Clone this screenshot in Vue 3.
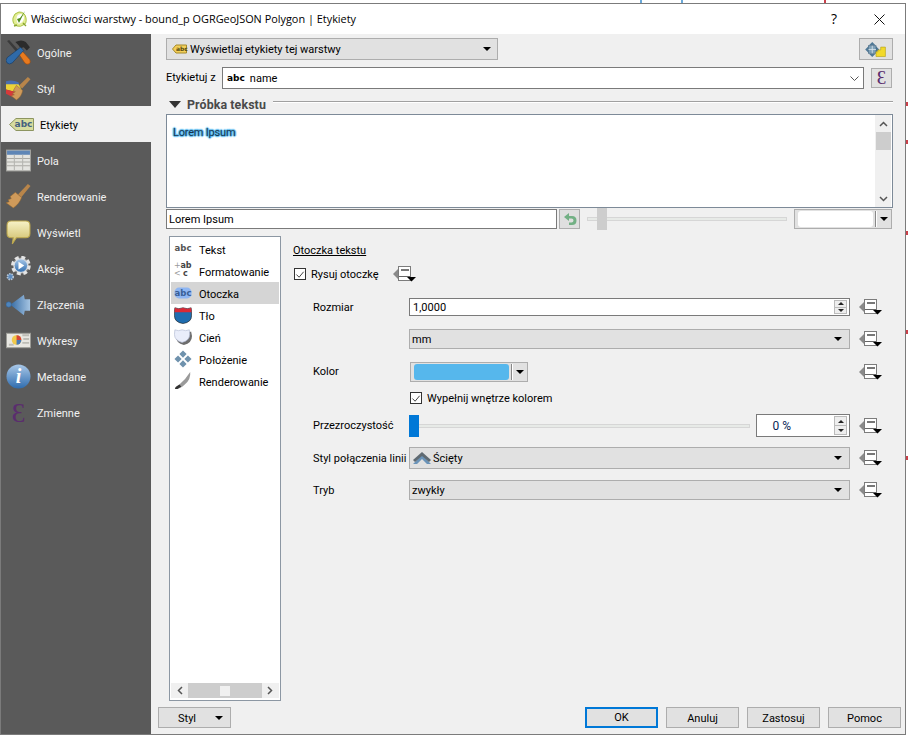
<script setup>
const nav = [
  { id: 'i-general', label: 'Ogólne' },
  { id: 'i-style', label: 'Styl' },
  { id: 'i-labels', label: 'Etykiety', active: true, glyph: 'abc', cls: 'g-labels' },
  { id: 'i-fields', label: 'Pola' },
  { id: 'i-brush', label: 'Renderowanie' },
  { id: 'i-display', label: 'Wyświetl' },
  { id: 'i-actions', label: 'Akcje' },
  { id: 'i-joins', label: 'Złączenia' },
  { id: 'i-charts', label: 'Wykresy' },
  { id: 'i-meta', label: 'Metadane', glyph: 'i', cls: 'g-meta' },
  { id: 'i-vars', label: 'Zmienne', glyph: 'Ɛ', cls: 'g-vars' },
]
const tabs = [
  { id: 't-text', label: 'Tekst', glyph: 'abc', cls: 'g-text' },
  { id: 't-format', label: 'Formatowanie', format: true },
  { id: 't-buffer', label: 'Otoczka', active: true, glyph: 'abc', cls: 'g-buffer' },
  { id: 't-bg', label: 'Tło' },
  { id: 't-shadow', label: 'Cień' },
  { id: 't-place', label: 'Położenie' },
  { id: 't-render', label: 'Renderowanie' },
]
</script>

<template>
  <div class="page">
    <svg class="defs" width="0" height="0" aria-hidden="true">
      <defs>
        <linearGradient id="gBlue" x1="0" y1="0" x2="0" y2="1"><stop offset="0" stop-color="#a9c8e8"/><stop offset="1" stop-color="#2f6cae"/></linearGradient>
        <linearGradient id="gYellow" x1="0" y1="0" x2="0" y2="1"><stop offset="0" stop-color="#f7f2c8"/><stop offset="1" stop-color="#cdbb62"/></linearGradient>
        <linearGradient id="gArrow" x1="0" y1="0" x2="1" y2="0"><stop offset="0" stop-color="#3b70a8"/><stop offset="1" stop-color="#a5c4e2"/></linearGradient>
      </defs>
      <symbol id="dd" viewBox="0 0 23 16">
        <path d="M0 8 5 3v10z" fill="#8a8a8a"/>
        <rect x="5.500" y="0.500" width="12" height="14" fill="#fff" stroke="#7c7c7c"/>
        <rect x="8" y="3" width="8" height="2" fill="#777"/>
        <path d="M6 10.500h11" stroke="#666"/>
        <path d="M14 11h9l-4.500 4.500z" fill="#000"/>
      </symbol>
      <symbol id="i-general" viewBox="0 0 24 24">
        <path d="M1 1l2-1 11 12-2 2z" fill="#3a3a3a"/>
        <path d="M12 13l3-3 8 9q1 3-1 4t-4-1z" fill="#e87a1e" stroke="#9a4a10" stroke-width=".6"/>
        <path d="M9 2q6-3 10 0l4 5-3 3-3-3-3 1-2-3z" fill="#2b2b2b"/>
        <path d="M14 7l3 3-11 12q-3 2-5 0t0-5z" fill="#2f6aa8" stroke="#173a60" stroke-width=".6"/>
      </symbol>
      <symbol id="i-style" viewBox="0 0 24 24">
        <path d="M0 5q6-2 12 1l1 4H0z" fill="#4a6fb0"/>
        <path d="M0 8h12l3 5-3 3-12-3z" fill="#ecd338"/>
        <path d="M0 13l12 3-3 3-1 2-8-4z" fill="#d6393a"/>
        <path d="M21 1l2.500 2-8 9-3-3z" fill="#b8854a"/>
        <path d="M10 9l6 5q-1 6-6 9l-5-4 3-1-2-1 3-2-2-1z" fill="#cf9a5a" stroke="#8e6430" stroke-width=".5"/>
      </symbol>
      <symbol id="i-labels" viewBox="0 0 25 25">
        <path d="M.5 12.500 7 6.500h17.500v12H7z" fill="#d7dc9f" stroke="#8d9560"/>
      </symbol>
      <symbol id="i-fields" viewBox="0 0 24 21">
        <rect width="23" height="20" x=".5" y=".5" fill="#e4e4e0" stroke="#a0a09c"/>
        <rect width="22" height="4" x="1" y="1" fill="#5f86b6"/>
        <path d="M1 8.500h22M1 12h22M1 15.500h22" stroke="#aaa9a4"/>
        <path d="M8 5v15M16 5v15" stroke="#b5b5b0"/>
      </symbol>
      <symbol id="i-brush" viewBox="0 0 24 24">
        <path d="M21 0l2.500 2-9 11-3-3z" fill="#b8854a"/>
        <path d="M9 8l6 5q-2 6-8 10l-7-5 3-1-1-2 3-1-1-2z" fill="#cf9a5a" stroke="#8e6430" stroke-width=".5"/>
      </symbol>
      <symbol id="i-display" viewBox="0 0 24 24">
        <path d="M5 1h14q4 0 4 4v8q0 4-4 4H10l-4 6 1-6H5q-4 0-4-4V5q0-4 4-4z" fill="url(#gYellow)" stroke="#bda84e"/>
      </symbol>
      <symbol id="i-actions" viewBox="0 0 26 26">
        <circle cx="15.500" cy="10" r="8.500" fill="#9a9a9a" stroke="#e4e4e4" stroke-width="3.500" stroke-dasharray="4 2.700"/>
        <circle cx="15.500" cy="10" r="7" fill="url(#gBlue)" stroke="#dfe3e8"/>
        <path d="M13 6l6 4-6 4z" fill="#fff"/>
        <circle cx="4.500" cy="21.500" r="3" fill="#5d8cc0" stroke="#b6c4d4" stroke-width="1.800" stroke-dasharray="1.500 1"/>
      </symbol>
      <symbol id="i-joins" viewBox="0 0 28 24">
        <circle cx="3" cy="12" r="3" fill="#4f84bb" stroke="#2b5f96" stroke-width=".6"/>
        <path d="M6 11.500 20 1l1 5h6v13h-6l-1 5L6 13z" fill="url(#gArrow)"/>
      </symbol>
      <symbol id="i-charts" viewBox="0 0 26 17">
        <rect width="25" height="15" x=".5" y="1" fill="#e8e7e2" stroke="#9b9b96"/>
        <path d="M17 3h7M18 7h6M17 11h7M3 13h5" stroke="#bdbdb6" stroke-width="2"/>
        <circle cx="11" cy="8" r="5" fill="#f0c94a"/>
        <path d="M11 8V3a5 5 0 0 1 5 5z" fill="#d44438"/>
        <path d="M11 8h5a5 5 0 0 1-5 5z" fill="#4779b8"/>
      </symbol>
      <symbol id="i-meta" viewBox="0 0 25 25">
        <circle cx="12.500" cy="12.500" r="12" fill="url(#gBlue)"/>
      </symbol>
      <symbol id="t-buffer" viewBox="0 0 20 18">
        <rect x=".5" y="3" width="19" height="12" rx="5" fill="#8fb6f2"/>
      </symbol>
      <symbol id="t-bg" viewBox="0 0 20 20">
        <path d="M1 2q4 2 9 0 5 2 9 0l.500 4v5q0 7-9.500 8.500Q.500 18 .500 11V6z" fill="#1f6db0" stroke="#222" stroke-width=".7"/>
        <path d="M1 2q4 2 9 0 5 2 9 0l.500 5H.500z" fill="#d92a36"/>
      </symbol>
      <symbol id="t-shadow" viewBox="0 0 20 20">
        <path d="M2 4q4 2 9 0 4 2 8 0l1 5q0 8-9 10-9-2-9-10z" fill="#6d6d6d"/>
        <path d="M1 2q4 2 8 0 4 2 8 0l.500 5q0 7-8.500 9Q.500 14 .500 7z" fill="#e9edfa" stroke="#aeb8d0" stroke-width=".7"/>
      </symbol>
      <symbol id="t-place" viewBox="0 0 20 20">
        <path d="M10 .5l4 4-4 4-4-4zM10 11.500l4 4-4 4-4-4zM4.500 6l4 4-4 4-4-4zM15.500 6l4 4-4 4-4-4z" fill="#6f92ad"/>
      </symbol>
      <symbol id="t-render" viewBox="0 0 20 20">
        <path d="M18 0q1 8-6 14-5 5-11 5 1-3 5-5Q13 8 18 0z" fill="#9a9a9a"/>
        <path d="M1 19q1-3 5-5l2 2q-3 3-7 3z" fill="#333"/>
      </symbol>
      <symbol id="i-move" viewBox="0 0 34 20">
        <path d="M13 2.500l3.500 3.500h-7zM13 18.500l-3.500-3.500h7zM5.500 10.500l3.500-3.500v7zM20.500 10.500l-3.500 3.500v-7z" fill="#4f7896"/>
        <rect x="9" y="6.500" width="8" height="8" fill="#7ea0b8" stroke="#3f6480" stroke-width=".7"/>
        <path d="M13 6.500v8M9 10.500h8" stroke="#d8e4ec" stroke-width=".9"/>
        <path d="M17 18v-5h2v-2h3V8h5v10z" fill="#f2d92a" stroke="#b5a31e" stroke-width=".7"/>
      </symbol>
    </svg>

    <i class="mark m1"></i><i class="mark m2"></i><i class="mark m3"></i>
    <i class="edge e1"></i><i class="edge e2"></i><i class="edge e3"></i><i class="edge e4"></i><i class="edge e5"></i>

    <div class="win">
      <header class="title">
        <svg class="logo" viewBox="0 0 17 18" width="17" height="18">
          <path d="M8 2q6 0 7 6t-3 7q-2 2-6 1-5-2-4-8 1-5 6-6z" fill="#e3ee96" stroke="#a9c244" stroke-width="1"/>
          <path d="M6 6q-1 3 0 6t4 1q3-2 3-6-1-3-3-3-3 0-4 2z" fill="#fff"/>
          <path d="M6 9l2 4 6-12-5 7z" fill="#4e8a1e"/>
          <path d="M3 16l3-1M12 13l3 3" stroke="#8aa531" stroke-width="1.400"/>
        </svg>
        <span class="title-text">Właściwości warstwy - bound_p OGRGeoJSON Polygon | Etykiety</span>
        <span class="help">?</span>
        <svg class="close" viewBox="0 0 11 11" width="11" height="11"><path d="M.5.500l10 10M10.500.500l-10 10" stroke="#111" fill="none"/></svg>
      </header>

      <div class="frame">
        <nav class="side">
          <div v-for="n in nav" :key="n.id" class="nav-item" :class="{ active: n.active }">
            <span class="nav-ico">
              <svg v-if="n.id !== 'i-vars'"><use :href="'#' + n.id"/></svg>
              <span v-if="n.glyph" class="glyph" :class="n.cls">{{ n.glyph }}</span>
            </span>
            <span class="down2">{{ n.label }}</span>
          </div>
        </nav>

        <div class="main">
          <div class="body">
            <div class="row1">
              <div class="combo top-combo">
                <span class="mini-tag">
                  <svg viewBox="0 0 15 10" width="15" height="10"><path d="M.5 5 4 1h10.500v8H4z" fill="#f3cf5a" stroke="#a58a2a"/></svg>
                  <b>abc</b>
                </span>
                <span class="top-txt down1">Wyświetlaj etykiety tej warstwy</span>
                <i class="tri"></i>
              </div>
              <button class="btn move"><svg width="34" height="20"><use href="#i-move"/></svg></button>
            </div>

            <div class="row2">
              <span class="lbl-from">Etykietuj z</span>
              <div class="edit-combo">
                <b class="abc">abc</b><span class="down1">name</span>
                <svg class="chev" viewBox="0 0 9 5" width="9" height="5"><path d="M.5.500l4 4 4-4" fill="none" stroke="#555"/></svg>
              </div>
              <button class="btn eps">Ɛ</button>
            </div>

            <div class="group">
              <i class="tri big"></i>
              <b>Próbka tekstu</b>
              <span class="group-line"></span>
            </div>

            <div class="preview">
              <div class="lorem"><span>Lorem Ipsum</span></div>
              <div class="vbar">
                <svg viewBox="0 0 9 6" width="9" height="6"><path d="M1 5l3.500-3.500L8 5" fill="none" stroke="#555" stroke-width="1.500"/></svg>
                <i class="vthumb"></i>
                <svg class="down" viewBox="0 0 9 6" width="9" height="6"><path d="M1 1l3.500 3.500L8 1" fill="none" stroke="#555" stroke-width="1.500"/></svg>
              </div>
            </div>

            <div class="row3">
              <div class="sample">Lorem Ipsum</div>
              <button class="btn undo">
                <svg viewBox="0 0 14 14" width="14" height="14"><path d="M6 1 1 5l5 4V6.500h2.500q2 0 2 2t-2 2H6V13h3q4.500 0 4.500-4.500T9 4H6z" fill="#72b084"/></svg>
              </button>
              <div class="slider top-slider"><i class="track"></i><i class="knob grey"></i></div>
              <div class="colorbtn wide"><i class="swatch white"></i><i class="sep"></i><i class="tri"></i></div>
            </div>

            <div class="lower">
              <div class="list">
                <div class="list-items">
                  <div v-for="t in tabs" :key="t.id" class="list-item" :class="{ active: t.active }">
                    <span class="list-ico">
                      <svg v-if="t.id !== 't-text' && !t.format"><use :href="'#' + t.id"/></svg>
                      <span v-if="t.glyph" class="glyph" :class="t.cls">{{ t.glyph }}</span>
                      <span v-if="t.format" class="glyph g-format"><em>+</em>ab<br><em>&lt;</em>&nbsp;c</span>
                    </span>
                    <span class="down2">{{ t.label }}</span>
                  </div>
                </div>
                <div class="hbar">
                  <svg viewBox="0 0 6 9" width="6" height="9"><path d="M5 1L1.500 4.500 5 8" fill="none" stroke="#555" stroke-width="1.500"/></svg>
                  <div class="htrack"><i></i></div>
                  <svg viewBox="0 0 6 9" width="6" height="9"><path d="M1 1l3.500 3.500L1 8" fill="none" stroke="#555" stroke-width="1.500"/></svg>
                </div>
              </div>

              <section class="pane">
                <div class="pane-title">Otoczka tekstu</div>
                <div class="draw">
                  <span class="check"><svg viewBox="0 0 11 11" width="11" height="11"><path d="M1.500 5.500l3 3 5-6" fill="none" stroke="#333"/></svg></span>
                  <span class="draw-txt down1">Rysuj otoczkę</span>
                  <svg class="dd"><use href="#dd"/></svg>
                </div>

                <div class="form">
                  <span class="down1">Rozmiar</span>
                  <div class="field">
                    <span class="grow num down1">1,0000</span>
                    <span class="spin"><i class="up"></i><i class="dn"></i></span>
                  </div>
                  <svg class="dd"><use href="#dd"/></svg>

                  <span></span>
                  <div class="combo"><span class="grow down1">mm</span><i class="tri"></i></div>
                  <svg class="dd"><use href="#dd"/></svg>

                  <span>Kolor</span>
                  <div class="colorbtn narrow"><i class="swatch blue"></i><i class="sep"></i><i class="tri"></i></div>
                  <svg class="dd"><use href="#dd"/></svg>

                  <span></span>
                  <div class="fill">
                    <span class="check"><svg viewBox="0 0 11 11" width="11" height="11"><path d="M1.500 5.500l3 3 5-6" fill="none" stroke="#333"/></svg></span>
                    <span class="down1">Wypełnij wnętrze kolorem</span>
                  </div>
                  <span></span>

                  <span class="down1">Przezroczystość</span>
                  <div class="opacity">
                    <div class="slider form-slider"><i class="track"></i><i class="knob blue"></i></div>
                    <div class="field pct">
                      <span class="grow right down1">0 %</span>
                      <span class="spin"><i class="up"></i><i class="dn"></i></span>
                    </div>
                  </div>
                  <svg class="dd"><use href="#dd"/></svg>

                  <span class="down1 nowrap">Styl połączenia linii</span>
                  <div class="combo tall">
                    <svg class="join" viewBox="0 0 18 14" width="18" height="14">
                      <path d="M0 13 9 4l9 9h-4L9 8l-5 5z" fill="#6a93b8"/>
                      <path d="M0 9 9 1l9 8-2 2-7-6-7 6z" fill="#5f6a72"/>
                    </svg>
                    <span class="grow down1">Ścięty</span><i class="tri"></i>
                  </div>
                  <svg class="dd"><use href="#dd"/></svg>

                  <span class="down1">Tryb</span>
                  <div class="combo"><span class="grow down1">zwykły</span><i class="tri"></i></div>
                  <svg class="dd"><use href="#dd"/></svg>
                </div>
              </section>
            </div>
          </div>

          <footer class="foot">
            <button class="fbtn style-btn"><span>Styl</span><i class="tri"></i></button>
            <span class="spacer"></span>
            <button class="fbtn ok">OK</button>
            <button class="fbtn">Anuluj</button>
            <button class="fbtn">Zastosuj</button>
            <button class="fbtn">Pomoc</button>
          </footer>
        </div>
      </div>
    </div>
  </div>
</template>

<style>
html, body { margin: 0; background: #fff; }
</style>

<style scoped>
.page {
  position: relative;
  width: 908px;
  height: 735px;
  overflow: hidden;
  background: #fff;
  font: 11px/16px Roboto, "Open Sans", sans-serif;
  color: #000;
}
.defs { position: absolute; }
i { display: block; font-style: normal; }
em { font-style: normal; font-weight: 400; color: #999; }
button { font: inherit; color: inherit; padding: 0; }
.down1 { padding-top: 1px; }
.down2 { padding-top: 3px; }

.mark { position: absolute; top: 0; width: 2px; height: 3px; }
.m1 { left: 640px; background: #6aa8d8; }
.m2 { left: 681px; background: #6aa8d8; }
.m3 { left: 824px; background: #c9404a; }
.edge { position: absolute; left: 906px; width: 2px; height: 4px; background: #c9404a; }
.e1 { top: 102px; } .e2 { top: 140px; } .e3 { top: 231px; } .e4 { top: 330px; } .e5 { top: 456px; }

.win {
  box-sizing: border-box;
  width: 906px;
  height: 732px;
  margin-top: 3px;
  border: 1px solid #7b7b7b;
  background: #f0f0f0;
  display: flex;
  flex-direction: column;
}
.title {
  height: 30px;
  background: #fff;
  display: flex;
  align-items: center;
  padding: 0 20px 0 10px;
  flex: none;
}
.logo { margin-right: 3px; }
.title-text { flex: 1; font: 10.9px/16px "Open Sans", sans-serif; }
.help { font: 14px/16px "Open Sans", sans-serif; margin-right: 37px; }

.frame { flex: 1; display: flex; min-height: 0; }
.side { width: 150px; background: #5a5a5a; color: #f1f1f1; flex: none; }
.nav-item { height: 36px; display: flex; align-items: center; gap: 6px; padding-left: 5px; }
.nav-item.active { background: #f0f0f0; color: #000; padding-left: 8px; }
.nav-ico { position: relative; width: 25px; height: 25px; display: flex; align-items: center; justify-content: center; }
.nav-ico svg { width: 25px; height: 25px; overflow: visible; }

.glyph { position: absolute; left: 0; right: 0; top: 0; bottom: 0; display: flex; align-items: center; justify-content: center; font-family: "DejaVu Sans", sans-serif; font-weight: 700; }
.g-labels { font-size: 9px; color: #44617f; padding-left: 4px; }
.g-meta { font: italic 700 20px/25px "Liberation Serif", serif; color: #fff; }
.g-vars { font: 400 28px/25px "Liberation Serif", serif; color: #5a2d6e; }
.g-text { font-size: 8.5px; color: #555; padding-bottom: 3px; }
.g-buffer { font-size: 8.5px; color: #3a5f96; padding-bottom: 1px; }
.g-format { display: block; font-size: 8px; line-height: 8px; color: #444; white-space: nowrap; letter-spacing: -.2px; }

.main { flex: 1; display: flex; flex-direction: column; min-width: 0; }
.body { flex: 1; padding: 4px 12px 0 15px; min-height: 0; }

.combo {
  box-sizing: border-box;
  height: 20px;
  background: #e1e1e1;
  border: 1px solid #adadad;
  display: flex;
  align-items: center;
  padding: 0 7px 0 2px;
}
.grow { flex: 1; }
.tri { width: 0; height: 0; border-left: 4px solid transparent; border-right: 4px solid transparent; border-top: 4px solid #000; flex: none; }
.tri.big { border-left-width: 6px; border-right-width: 6px; border-top-width: 7px; border-top-color: #333; }

.btn { box-sizing: border-box; background: #e1e1e1; border: 1px solid #adadad; display: flex; align-items: center; justify-content: center; flex: none; }

.row1 { display: flex; justify-content: space-between; height: 22px; }
.top-combo { width: 332px; height: 22px; padding: 0 6px 0 5px; gap: 3px; }
.top-txt { flex: 1; }
.mini-tag { position: relative; width: 15px; height: 10px; display: block; flex: none; }
.mini-tag svg { display: block; }
.mini-tag b { position: absolute; left: 4px; top: 0; font: 700 6px/10px "DejaVu Sans", sans-serif; color: #554a10; }
.move { width: 34px; height: 22px; }

.row2 { display: flex; align-items: center; height: 22px; margin-top: 7px; }
.lbl-from { width: 56px; flex: none; }
.edit-combo {
  box-sizing: border-box;
  width: 642px;
  height: 22px;
  background: #fff;
  border: 1px solid #7a7a7a;
  display: flex;
  align-items: center;
  padding: 0 4px 0 4px;
}
.abc { font-family: "DejaVu Sans", sans-serif; font-size: 9px; margin-right: 5px; }
.edit-combo span { flex: 1; }
.eps { width: 21px; height: 20px; margin-left: 7px; font: 19px/18px "Liberation Serif", serif; color: #5a2d6e; }

.group { display: flex; align-items: center; height: 17px; margin-top: 7px; color: #4a4a4a; padding-left: 3px; }
.group b { margin-left: 6px; font-size: 12.4px; letter-spacing: .1px; }
.group-line { flex: 1; height: 1px; margin: -6px 0 0 7px; background: #a0a0a0; box-shadow: 0 1px 0 #fff; }

.preview {
  box-sizing: border-box;
  height: 94px;
  margin-top: 1px;
  background: #fff;
  border: 1px solid #7d8a98;
  display: flex;
}
.lorem { flex: 1; padding: 10px 6px 0; }
.lorem span { color: #17344f; letter-spacing: -.2px; text-shadow: 0 0 2px #56b7ec, 0 0 2px #56b7ec, 1px 0 1px #56b7ec, -1px 0 1px #56b7ec, 0 1px 1px #56b7ec, 0 -1px 1px #56b7ec; }
.vbar { width: 16px; margin-right: 1px; background: #f0f0f0; display: flex; flex-direction: column; align-items: center; padding-top: 6px; box-sizing: border-box; }
.vthumb { width: 15px; height: 18px; background: #cdcdcd; margin-top: 5px; }
.vbar .down { margin-top: auto; margin-bottom: 5px; }

.row3 { display: flex; align-items: center; height: 20px; margin-top: 1px; }
.sample { box-sizing: border-box; width: 391px; height: 20px; background: #fff; border: 1px solid #7a7a7a; padding: 2px 2px 0; flex: none; }
.undo { width: 21px; height: 20px; margin-left: 2px; background: #dfdfdf; }
.slider { position: relative; flex: none; }
.track { position: absolute; left: 0; right: 0; top: 50%; height: 4px; margin-top: -2px; box-sizing: border-box; background: #e7eae7; border: 1px solid #d6d6d6; }
.knob { position: absolute; top: 0; width: 10px; height: 22px; }
.knob.grey { left: 10px; background: #cdcdcd; }
.knob.blue { left: 0; background: #0078d7; }
.top-slider { width: 200px; height: 22px; margin: 0 7px; }

.colorbtn {
  box-sizing: border-box;
  height: 20px;
  background: #e1e1e1;
  border: 1px solid #adadad;
  display: flex;
  align-items: center;
  padding: 0 3px;
}
.swatch { flex: 1; height: 16px; border-radius: 3px; }
.swatch.white { background: #fff; }
.swatch.blue { background: #56b7ec; }
.sep { width: 1px; height: 16px; background: #fff; border-left: 1px solid #888; box-sizing: content-box; margin: 0 3px 0 2px; }
.wide { width: 98px; }
.narrow { width: 118px; margin-left: 1px; }

.lower { display: flex; margin-top: 7px; padding-left: 3px; }
.list {
  box-sizing: border-box;
  width: 112px;
  height: 465px;
  background: #fff;
  border: 1px solid #8c97a3;
  padding: 1px;
  display: flex;
  flex-direction: column;
}
.list-items { flex: 1; }
.list-item { height: 22px; display: flex; align-items: center; gap: 7px; padding-left: 3px; white-space: nowrap; overflow: hidden; }
.list-item.active { background: #d5d5d5; }
.list-ico { position: relative; width: 18px; height: 18px; display: flex; align-items: center; justify-content: center; flex: none; }
.list-ico svg { width: 18px; height: 18px; overflow: visible; }
.hbar { height: 15px; display: flex; align-items: center; margin-bottom: 1px; background: #f0f0f0; padding: 0 6px; gap: 5px; }
.htrack { flex: 1; height: 15px; background: #cdcdcd; display: flex; align-items: center; justify-content: center; }
.htrack i { width: 10px; height: 10px; background: #f0f0f0; }

.pane { margin-left: 12px; padding-top: 6px; flex: 1; min-width: 0; }
.pane-title { text-decoration: underline; height: 16px; padding-top: 1px; box-sizing: border-box; line-height: 16px; }
.draw { display: flex; align-items: center; height: 18px; margin-top: 7px; padding-left: 1px; }
.draw-txt { margin-left: 5px; width: 82px; flex: none; }
.check { box-sizing: border-box; width: 12px; height: 12px; background: #fff; border: 1px solid #333; display: flex; flex: none; }

.dd { width: 23px; height: 16px; display: block; }

.form {
  margin: 8px 0 0 20px;
  display: grid;
  grid-template-columns: 96px 441px 32px;
  grid-template-rows: 32px 32px 33px 20px 35px 30px 34px;
  align-items: center;
}
.form > .dd { margin-left: 9px; }
.form > .combo { height: 20px; }
.form > .combo.tall { height: 22px; padding-left: 3px; }
.join { margin-right: 2px; }
.nowrap { white-space: nowrap; }

.field {
  box-sizing: border-box;
  height: 18px;
  background: #fff;
  border: 1px solid #7a7a7a;
  display: flex;
  align-items: center;
  padding: 0 2px 0 2px;
}
.num { padding-left: 1px; }
.spin { width: 13px; height: 14px; display: flex; flex-direction: column; border: 1px solid #bbb; box-sizing: border-box; background: #eee; flex: none; }
.spin i { flex: 1; display: flex; align-items: center; justify-content: center; }
.spin i::before { content: ""; width: 0; height: 0; border-left: 3px solid transparent; border-right: 3px solid transparent; }
.spin .up::before { border-bottom: 3px solid #222; }
.spin .dn { border-top: 1px solid #bbb; }
.spin .dn::before { border-top: 3px solid #222; }

.fill { display: flex; align-items: center; gap: 5px; padding-left: 1px; }

.opacity { display: flex; align-items: center; justify-content: space-between; }
.form-slider { width: 341px; height: 22px; }
.pct { width: 94px; height: 23px; }
.pct .spin { height: 19px; }
.right { text-align: right; color: #0a1f55; font-size: 12px; }
.pct .grow { padding-right: 43px; }

.foot { flex: none; height: 24px; padding: 0 4px 0 7px; display: flex; align-items: flex-start; gap: 8px; margin-bottom: 3px; }
.spacer { flex: 1; }
.fbtn { box-sizing: border-box; width: 73px; height: 21px; background: #e1e1e1; border: 1px solid #adadad; flex: none; text-align: center; padding-top: 2px; }
.ok { border: 2px solid #0078d7; width: 73px; padding-top: 1px; }
.style-btn { display: flex; align-items: center; justify-content: space-between; padding: 0 7px 0 19px; }
.style-btn span { padding-top: 2px; }
</style>
